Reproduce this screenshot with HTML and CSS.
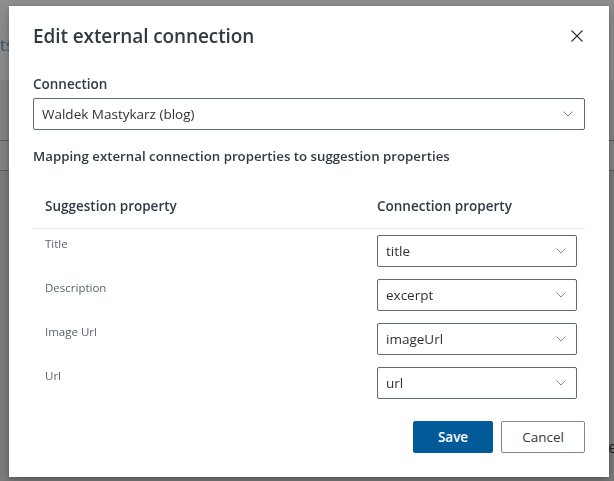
FILE: index.html
```html
<!DOCTYPE html>
<html>
<head>
<meta charset="utf-8">
<link rel="stylesheet" href="styles.css">
</head>
<body>
<div class="page">
  <div class="page-head"><div class="page-head-text"><span>Search results</span></div></div>
  <div class="page-band"></div>
  <div class="page-row"></div>
  <div class="page-rest"><span class="page-rest-text">e</span></div>
</div>
<div class="overlay">
  <div class="dialog" role="dialog">
    <div class="dialog-head">
      <h1 class="dialog-title">Edit external connection</h1>
      <button class="close-btn" aria-label="Close">
        <svg width="12" height="12" viewBox="0 0 12 12"><path d="M0.5 0.5 L11.5 11.5 M11.5 0.5 L0.5 11.5" stroke="#323130" stroke-width="1.1" fill="none"/></svg>
      </button>
    </div>
    <div class="field-label">Connection</div>
    <div class="dropdown wide">
      <span class="dropdown-text">Waldek Mastykarz (blog)</span>
      <svg class="chev" width="10" height="6" viewBox="0 0 10 6"><path d="M0.5 0.5 L5 5 L9.5 0.5" stroke="#8a8886" stroke-width="1" fill="none"/></svg>
    </div>
    <div class="section-label">Mapping external connection properties to suggestion properties</div>
    <div class="table">
      <div class="thead">
        <div class="th c1">Suggestion property</div>
        <div class="th c2">Connection property</div>
      </div>
      <div class="row">
        <div class="cell-label c1">Title</div>
        <div class="c2"><div class="dropdown"><span class="dropdown-text">title</span><svg class="chev" width="10" height="6" viewBox="0 0 10 6"><path d="M0.5 0.5 L5 5 L9.5 0.5" stroke="#8a8886" stroke-width="1" fill="none"/></svg></div></div>
      </div>
      <div class="row">
        <div class="cell-label c1">Description</div>
        <div class="c2"><div class="dropdown"><span class="dropdown-text">excerpt</span><svg class="chev" width="10" height="6" viewBox="0 0 10 6"><path d="M0.5 0.5 L5 5 L9.5 0.5" stroke="#8a8886" stroke-width="1" fill="none"/></svg></div></div>
      </div>
      <div class="row">
        <div class="cell-label c1">Image Url</div>
        <div class="c2"><div class="dropdown"><span class="dropdown-text">imageUrl</span><svg class="chev" width="10" height="6" viewBox="0 0 10 6"><path d="M0.5 0.5 L5 5 L9.5 0.5" stroke="#8a8886" stroke-width="1" fill="none"/></svg></div></div>
      </div>
      <div class="row">
        <div class="cell-label c1">Url</div>
        <div class="c2"><div class="dropdown"><span class="dropdown-text">url</span><svg class="chev" width="10" height="6" viewBox="0 0 10 6"><path d="M0.5 0.5 L5 5 L9.5 0.5" stroke="#8a8886" stroke-width="1" fill="none"/></svg></div></div>
      </div>
    </div>
    <div class="footer">
      <button class="btn primary">Save</button>
      <button class="btn secondary">Cancel</button>
    </div>
  </div>
</div>
</body>
</html>
```
FILE: styles.css
```css
* { box-sizing: border-box; }
html, body { margin: 0; padding: 0; }
body {
  width: 614px;
  height: 481px;
  overflow: hidden;
  font-family: "Open Sans", "Noto Sans", sans-serif;
  background: #7c7c7c;
}
.page {
  display: flex;
  flex-direction: column;
  width: 614px;
  height: 481px;
}
.page-head {
  height: 80px;
  background: #8e8e8e;
  padding-top: 34px;
  overflow: hidden;
}
.page-head-text {
  display: flex;
  justify-content: flex-end;
  width: 14px;
  font-size: 17px;
  color: #3e5266;
  line-height: 22px;
  white-space: nowrap;
}
.page-band {
  height: 61px;
  background: #858585;
  border-bottom: 1px solid #5e5e5e;
}
.page-row {
  height: 30px;
  background: #858585;
  border-bottom: 1px solid #5e5e5e;
}
.page-rest {
  flex: 1;
  background: #7d7d7d;
  padding-top: 265px;
  padding-left: 608px;
  font-size: 16px;
  color: #222;
}
.overlay {
  position: fixed;
  inset: 0;
  display: flex;
  align-items: flex-start;
  padding: 6px 0 0 9px;
}
.dialog {
  width: 600px;
  height: 471px;
  background: #fff;
  padding: 0 24px 24px 24px;
  display: flex;
  flex-direction: column;
  box-shadow: 0 6px 14px rgba(0,0,0,0.22), 0 1px 4px rgba(0,0,0,0.18);
  color: #323130;
}
.dialog-head {
  display: flex;
  align-items: center;
  justify-content: space-between;
  height: 62px;
  padding-bottom: 2px;
}
.dialog-title {
  margin: 0;
  font-size: 19px;
  font-weight: 600;
  color: #323a44;
  line-height: 28px;
  letter-spacing: -0.1px;
}
.close-btn {
  border: 0;
  background: transparent;
  padding: 0;
  width: 12px;
  height: 12px;
  margin-right: 2px;
  display: flex;
}
.field-label {
  margin-top: 6px;
  font-size: 13.5px;
  font-weight: 600;
  line-height: 20px;
  color: #323a44;
}
.dropdown {
  display: flex;
  align-items: center;
  justify-content: space-between;
  height: 32px;
  border: 1px solid #5f6a74;
  border-radius: 2px;
  padding: 0 10px 0 8px;
  background: #fff;
}
.dropdown.wide {
  margin-top: 4px;
  padding-right: 11px;
}
.dropdown-text {
  font-size: 13.5px;
  color: #323130;
  line-height: 20px;
  padding-bottom: 1px;
}
.chev { flex: none; }
.section-label {
  margin-top: 16px;
  font-size: 13.25px;
  font-weight: 600;
  line-height: 20px;
  color: #323a44;
}
.table {
  margin-top: 30px;
  display: flex;
  flex-direction: column;
}
.thead {
  display: grid;
  grid-template-columns: 1fr 208px;
  border-bottom: 1px solid #edebe9;
  padding-bottom: 12px;
}
.th {
  font-size: 13.5px;
  font-weight: 600;
  line-height: 20px;
  color: #323a44;
}
.c1 { padding-left: 12px; }
.c2 { padding-right: 8px; }
.row {
  display: grid;
  grid-template-columns: 1fr 208px;
  padding: 6px 0;
}
.cell-label {
  font-size: 11.5px;
  line-height: 16px;
  padding-top: 1px;
  color: #5a6470;
}
.footer {
  margin-top: auto;
  display: flex;
  justify-content: flex-end;
  gap: 8px;
}
.btn {
  height: 32px;
  border-radius: 2px;
  font-family: "Open Sans", "Noto Sans", sans-serif;
  font-size: 13.5px;
  font-weight: 600;
  padding: 0;
  line-height: 20px;
}
.primary {
  width: 80px;
  background: #035a98;
  border: 1px solid #035a98;
  color: #fff;
}
.secondary {
  width: 84px;
  background: #fff;
  border: 1px solid #7b8793;
  color: #323a44;
  font-weight: 500;
}
```
